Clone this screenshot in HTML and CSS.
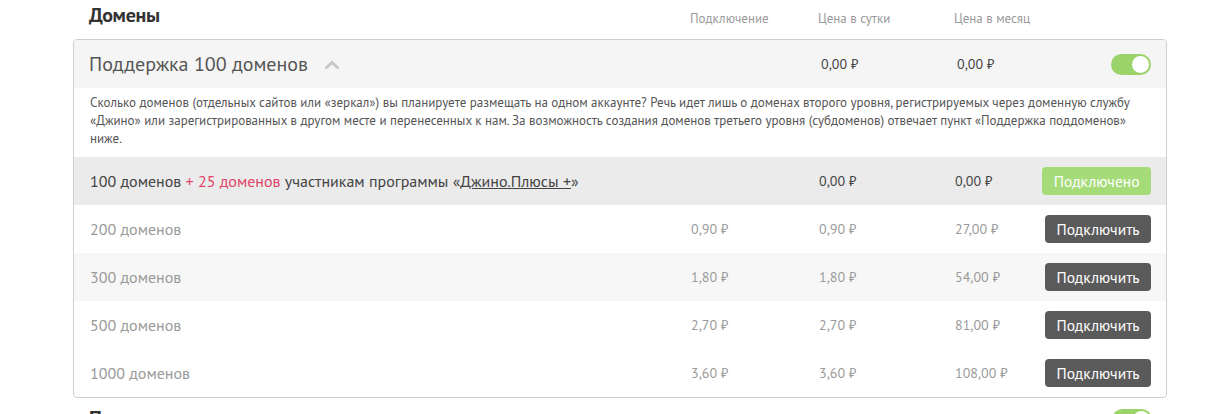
FILE: index.html
```html
<!DOCTYPE html>
<html lang="ru">
  <head>
    <meta charset="UTF-8" />
    <title>Домены</title>
    <link rel="stylesheet" href="styles.css">
  </head>
  <body>
    <div class="tariff">
      <div class="tariff-head">
        <h2 class="tariff-title">Домены</h2>
        <span class="tariff-col">Подключение</span>
        <span class="tariff-col">Цена в сутки</span>
        <span class="tariff-col">Цена в месяц</span>
        <span></span>
      </div>

      <div class="option-card">
        <div class="option-row option-main">
          <div class="option-name">
            Поддержка 100 доменов
            <svg class="chevron" width="16" height="10" viewBox="0 0 16 10">
              <path d="M1.5 8.5 L8 2.5 L14.5 8.5" fill="none" stroke="#c8c8c8" stroke-width="3" />
            </svg>
          </div>
          <span></span>
          <span class="price">0,00 ₽</span>
          <span class="price">0,00 ₽</span>
          <span class="toggle on"><i></i></span>
        </div>

        <p class="option-desc">
          Сколько доменов (отдельных сайтов или «зеркал») вы планируете размещать на одном аккаунте? Речь идет лишь о доменах второго уровня, регистрируемых через доменную службу «Джино» или зарегистрированных в другом месте и перенесенных к нам. За возможность создания доменов третьего уровня (субдоменов) отвечает пункт «Поддержка поддоменов» ниже.
        </p>

        <div class="option-row is-current">
          <div class="option-name">100 доменов <span class="bonus">+ 25 доменов</span> участникам программы «<a href="#" class="link">Джино.Плюсы +</a>»</div>
          <span></span>
          <span class="price">0,00 ₽</span>
          <span class="price">0,00 ₽</span>
          <button class="btn btn-done" type="button">Подключено</button>
        </div>

        <div class="option-row">
          <div class="option-name">200 доменов</div>
          <span class="price">0,90 ₽</span>
          <span class="price">0,90 ₽</span>
          <span class="price">27,00 ₽</span>
          <button class="btn" type="button">Подключить</button>
        </div>
        <div class="option-row is-striped">
          <div class="option-name">300 доменов</div>
          <span class="price">1,80 ₽</span>
          <span class="price">1,80 ₽</span>
          <span class="price">54,00 ₽</span>
          <button class="btn" type="button">Подключить</button>
        </div>
        <div class="option-row">
          <div class="option-name">500 доменов</div>
          <span class="price">2,70 ₽</span>
          <span class="price">2,70 ₽</span>
          <span class="price">81,00 ₽</span>
          <button class="btn" type="button">Подключить</button>
        </div>
        <div class="option-row">
          <div class="option-name">1000 доменов</div>
          <span class="price">3,60 ₽</span>
          <span class="price">3,60 ₽</span>
          <span class="price">108,00 ₽</span>
          <button class="btn" type="button">Подключить</button>
        </div>
      </div>

      <div class="option-row next-option">
        <div class="option-name">Поддержка поддоменов</div>
        <span></span>
        <span></span>
        <span></span>
        <span class="toggle on"><i></i></span>
      </div>
    </div>
  </body>
</html>
```

FILE: styles.css
```css
body {
  margin: 0;
  background: #fff;
  font-family: "PT Sans", "Open Sans", sans-serif;
  color: #333;
}

.tariff {
  width: 1094px;
  margin-left: 73px;
}

.tariff-head,
.option-row {
  display: grid;
  grid-template-columns: 601px 128px 136px 1fr auto;
  align-items: center;
  padding: 0 15px 0 16px;
}

.tariff-head {
  height: 39px;
  align-items: start;
}

.tariff-title {
  margin: 2px 0 0;
  font-size: 20px;
  font-weight: 700;
  color: #333;
  letter-spacing: -0.3px;
}

.tariff-col {
  margin-top: 10px;
  font-size: 13px;
  color: #9a9a9a;
}

.option-card {
  border: 1px solid #cfcfcf;
  border-radius: 4px;
  overflow: hidden;
}

.option-row {
  height: 48px;
  font-size: 14px;
  color: #9a9a9a;
}

.option-row .option-name {
  font-size: 16px;
}

.option-main {
  background: #f5f5f5;
}

.option-main .option-name {
  font-size: 20px;
  color: #555;
  margin-left: -1px;
}

.option-main .price,
.is-current .price {
  color: #444;
}

.option-main .price {
  margin-left: 2px;
}

.chevron {
  margin-left: 11px;
  vertical-align: 1px;
}

.option-desc {
  margin: 0;
  padding: 6px 32px 9px 16px;
  font-size: 13px;
  line-height: 18px;
  color: #555;
}

.is-current {
  background: #ebebeb;
  color: #444;
}

.is-striped {
  background: #f7f7f7;
}

.bonus {
  color: #e0456a;
}

.link {
  color: #444;
  text-decoration: underline;
}

.btn {
  height: 28px;
  padding: 0 11.5px;
  border: 0;
  border-radius: 4px;
  background: #5a5a5a;
  color: #fff;
  font-family: inherit;
  font-size: 15.5px;
}

.btn-done {
  background: #a5dc79;
  padding: 0 11.5px;
}

.toggle {
  width: 40px;
  height: 21px;
  border-radius: 11px;
  background: #9bd36b;
  display: flex;
  align-items: center;
  justify-content: flex-end;
  padding: 0 2px;
  box-sizing: border-box;
}

.toggle i {
  width: 17px;
  height: 17px;
  border-radius: 50%;
  background: #fff;
}

.next-option {
  margin-top: 11px;
  align-items: start;
}

.next-option .option-name {
  font-size: 20px;
  font-weight: 700;
  color: #333;
  margin-top: -4px;
}

.next-option .toggle {
  margin-top: 0;
}
```
